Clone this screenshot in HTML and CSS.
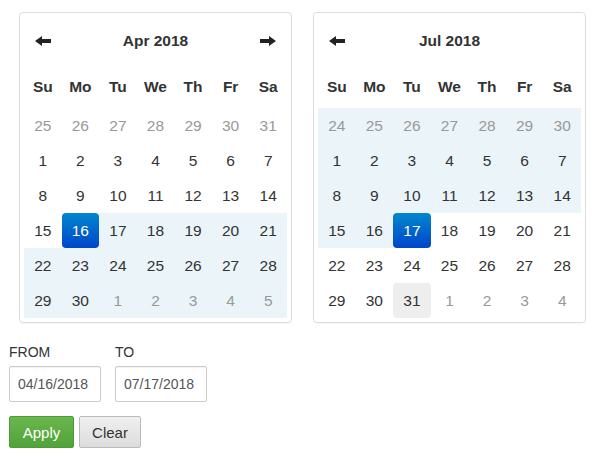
FILE: index.html
```html
<!DOCTYPE html>
<html>
<head>
<meta charset="utf-8">
<link rel="stylesheet" href="styles.css">
</head>
<body>
<div class="picker">
  <div class="calendars">
    <div class="cal">
      <div class="grid">
        <div class="nav"><svg width="16" height="10" viewBox="0 0 16 10"><path d="M0 5 L7 0 L7 3 L16 3 L16 7 L7 7 L7 10 Z" fill="#222"/></svg></div>
        <div class="month">Apr 2018</div>
        <div class="nav"><svg width="16" height="10" viewBox="0 0 16 10"><path d="M16 5 L9 0 L9 3 L0 3 L0 7 L9 7 L9 10 Z" fill="#222"/></svg></div>
        <div class="wd">Su</div><div class="wd">Mo</div><div class="wd">Tu</div><div class="wd">We</div><div class="wd">Th</div><div class="wd">Fr</div><div class="wd">Sa</div>
        <div class="d off">25</div><div class="d off">26</div><div class="d off">27</div><div class="d off">28</div><div class="d off">29</div><div class="d off">30</div><div class="d off">31</div>
        <div class="d">1</div><div class="d">2</div><div class="d">3</div><div class="d">4</div><div class="d">5</div><div class="d">6</div><div class="d">7</div>
        <div class="d">8</div><div class="d">9</div><div class="d">10</div><div class="d">11</div><div class="d">12</div><div class="d">13</div><div class="d">14</div>
        <div class="d">15</div><div class="d in sel">16</div><div class="d in">17</div><div class="d in">18</div><div class="d in">19</div><div class="d in">20</div><div class="d in">21</div>
        <div class="d in">22</div><div class="d in">23</div><div class="d in">24</div><div class="d in">25</div><div class="d in">26</div><div class="d in">27</div><div class="d in">28</div>
        <div class="d in">29</div><div class="d in">30</div><div class="d in off">1</div><div class="d in off">2</div><div class="d in off">3</div><div class="d in off">4</div><div class="d in off">5</div>
      </div>
    </div>
    <div class="cal">
      <div class="grid">
        <div class="nav"><svg width="16" height="10" viewBox="0 0 16 10"><path d="M0 5 L7 0 L7 3 L16 3 L16 7 L7 7 L7 10 Z" fill="#222"/></svg></div>
        <div class="month">Jul 2018</div>
        <div class="nav"></div>
        <div class="wd">Su</div><div class="wd">Mo</div><div class="wd">Tu</div><div class="wd">We</div><div class="wd">Th</div><div class="wd">Fr</div><div class="wd">Sa</div>
        <div class="d in off">24</div><div class="d in off">25</div><div class="d in off">26</div><div class="d in off">27</div><div class="d in off">28</div><div class="d in off">29</div><div class="d in off">30</div>
        <div class="d in">1</div><div class="d in">2</div><div class="d in">3</div><div class="d in">4</div><div class="d in">5</div><div class="d in">6</div><div class="d in">7</div>
        <div class="d in">8</div><div class="d in">9</div><div class="d in">10</div><div class="d in">11</div><div class="d in">12</div><div class="d in">13</div><div class="d in">14</div>
        <div class="d in">15</div><div class="d in">16</div><div class="d in sel">17</div><div class="d">18</div><div class="d">19</div><div class="d">20</div><div class="d">21</div>
        <div class="d">22</div><div class="d">23</div><div class="d">24</div><div class="d">25</div><div class="d">26</div><div class="d">27</div><div class="d">28</div>
        <div class="d">29</div><div class="d">30</div><div class="d today">31</div><div class="d off">1</div><div class="d off">2</div><div class="d off">3</div><div class="d off">4</div>
      </div>
    </div>
  </div>
  <div class="inputs">
    <div class="field">
      <label class="lbl">FROM</label>
      <input class="inp" type="text" value="04/16/2018">
    </div>
    <div class="field">
      <label class="lbl">TO</label>
      <input class="inp" type="text" value="07/17/2018">
    </div>
  </div>
  <div class="buttons">
    <button class="btn apply">Apply</button>
    <button class="btn clear">Clear</button>
  </div>
</div>
</body>
</html>
```
FILE: styles.css
```css
html, body {
  margin: 0;
  padding: 0;
  background: #fff;
}
body {
  font-family: "Liberation Sans", Arial, sans-serif;
  color: #333;
}
.picker {
  padding: 12px 0 0 9px;
}
.calendars {
  display: flex;
  gap: 21px;
  margin-left: 10px;
}
.cal {
  width: 263px;
  padding: 4px;
  border: 1px solid #ddd;
  border-radius: 4px;
  box-shadow: 0 1px 1px rgba(0,0,0,0.04);
}
.grid {
  display: grid;
  grid-template-columns: repeat(7, 1fr);
  grid-template-rows: 48px 43px repeat(6, 35px);
}
.nav {
  display: flex;
  align-items: center;
  justify-content: center;
  padding-bottom: 1px;
}
.month {
  grid-column: span 5;
  display: flex;
  align-items: center;
  justify-content: center;
  font-weight: bold;
  font-size: 15.5px;
  color: #333;
}
.wd {
  display: flex;
  align-items: center;
  justify-content: center;
  font-weight: bold;
  font-size: 15.5px;
  color: #333;
}
.d {
  display: flex;
  align-items: center;
  justify-content: center;
  font-size: 15.5px;
  color: #333;
}
.d.in {
  background: #ebf4f8;
}
.d.off {
  color: #999;
}
.d.sel {
  color: #fff;
  background: linear-gradient(to bottom, #0088cc, #0044cc);
  border-radius: 4px;
}
.d.today {
  background: #eee;
  border-radius: 4px;
}
.inputs {
  display: flex;
  gap: 14px;
  margin-top: 21px;
}
.field {
  display: flex;
  flex-direction: column;
}
.lbl {
  font-size: 14px;
  line-height: 16px;
  color: #333;
  margin-bottom: 6px;
}
.inp {
  box-sizing: border-box;
  width: 92px;
  height: 36px;
  border: 1px solid #ccc;
  border-radius: 2px;
  padding: 0 8px;
  font-family: "Liberation Sans", Arial, sans-serif;
  font-size: 14px;
  color: #555;
  box-shadow: inset 0 1px 1px rgba(0,0,0,0.05);
}
.buttons {
  display: flex;
  gap: 5px;
  margin-top: 14px;
}
.btn {
  box-sizing: border-box;
  height: 32px;
  padding: 0 12px;
  font-family: "Liberation Sans", Arial, sans-serif;
  font-size: 15px;
  border-radius: 2px;
  cursor: pointer;
}
.apply {
  width: 65px;
  color: #fff;
  border: 1px solid #4c9a3a;
  background: linear-gradient(to bottom, #6ab64c, #51a33a);
}
.clear {
  width: 62px;
  color: #333;
  border: 1px solid #bbb;
  background: linear-gradient(to bottom, #f0f0f0, #dcdcdc);
}
```
